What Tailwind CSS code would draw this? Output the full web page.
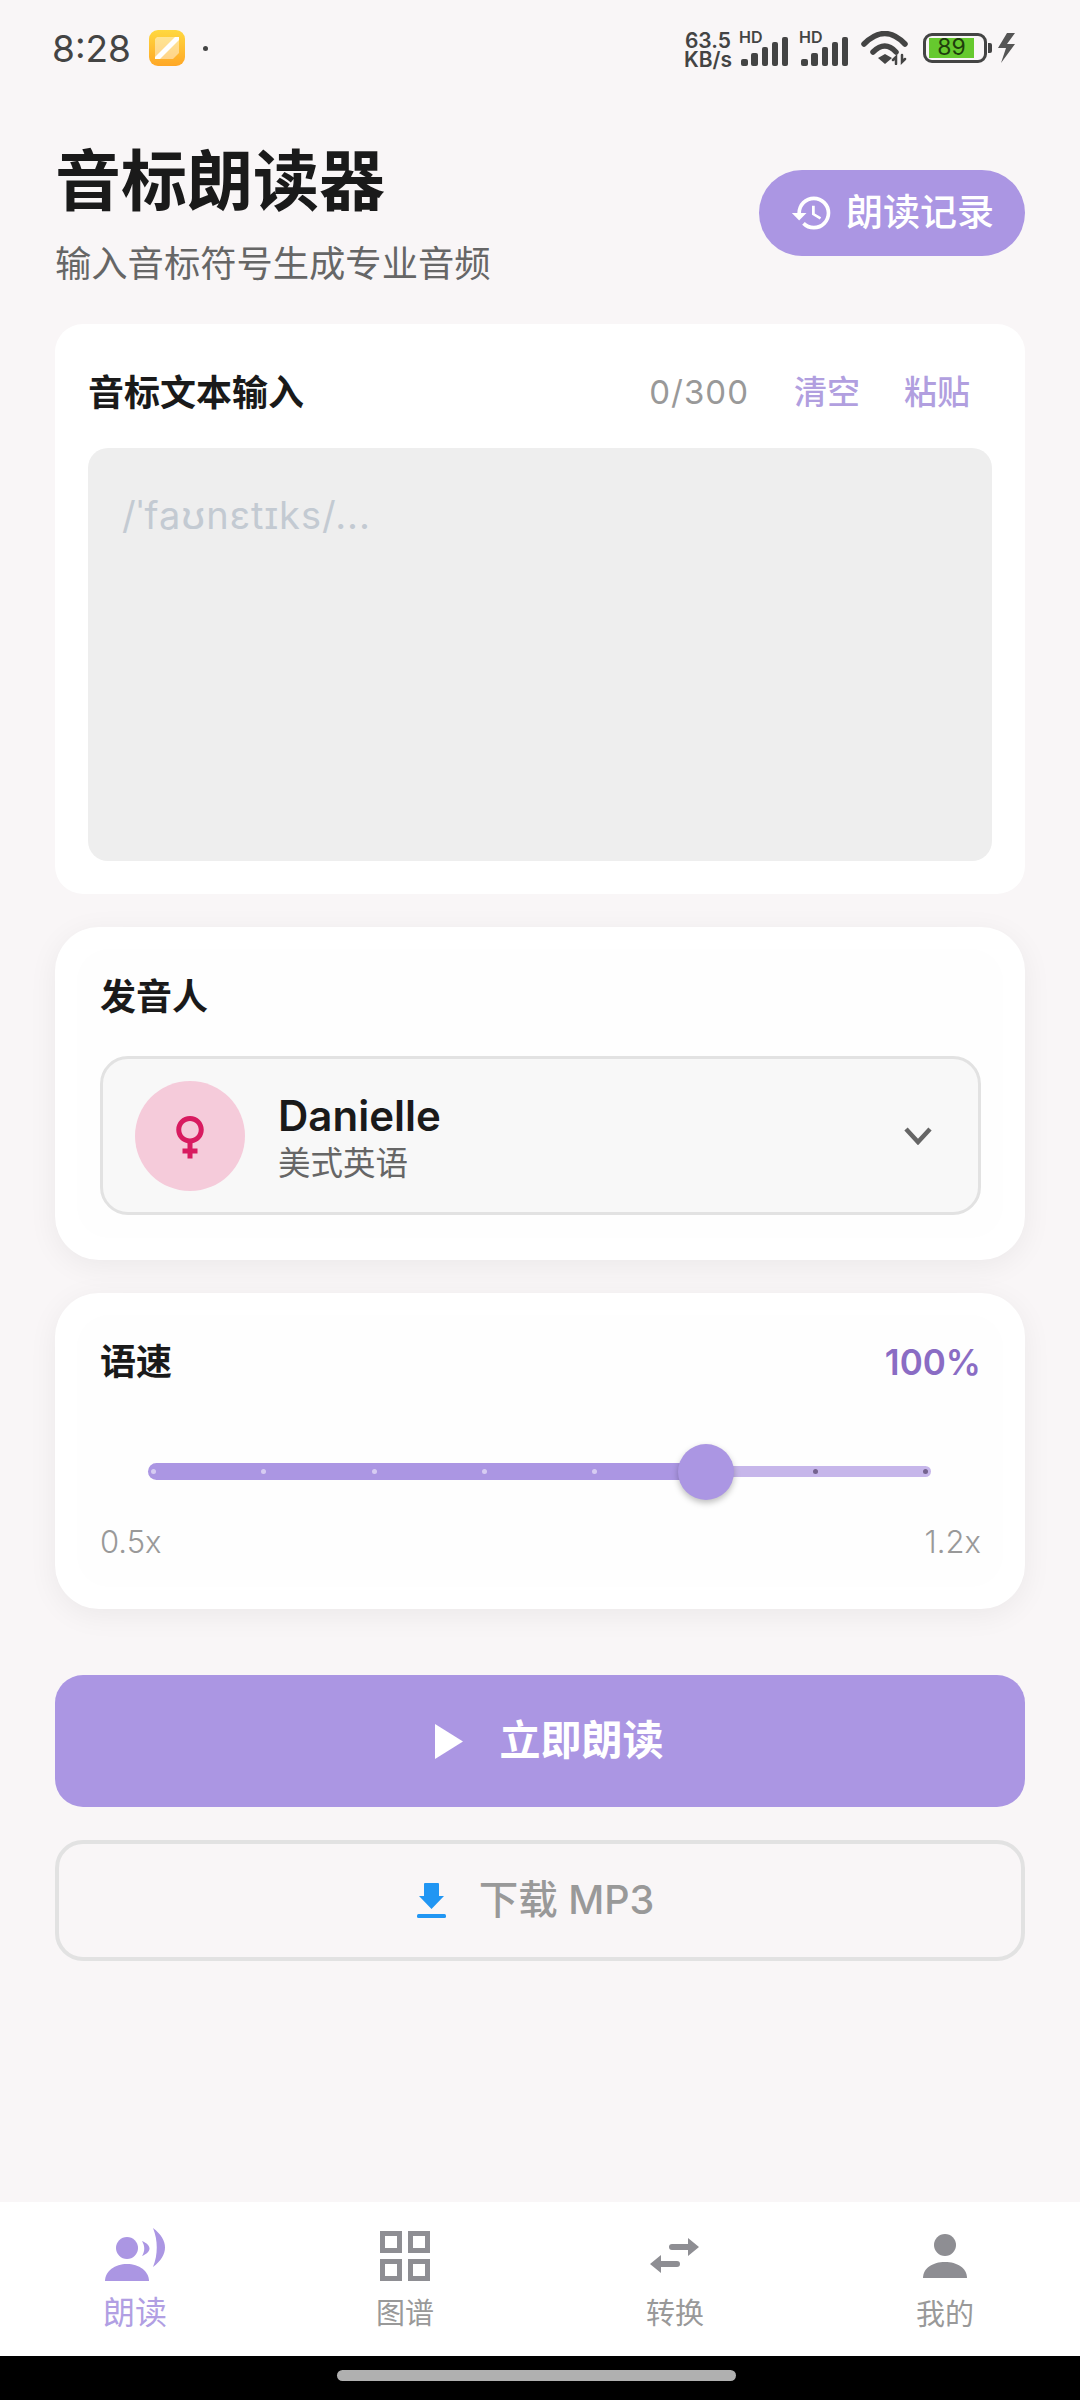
<!DOCTYPE html>
<html lang="zh-CN">
<head>
    <meta charset="UTF-8">
    <meta name="viewport" content="width=device-width, initial-scale=1.0">
    <title>音标朗读器</title>
    <script src="https://cdn.jsdelivr.net/npm/@tailwindcss/browser@4"></script>
</head>
<body class="bg-[#f9f6f7] font-['Inter','Noto_Sans_CJK_SC',sans-serif]">
<div class="w-[1080px] h-[2400px] flex flex-col overflow-hidden">

    <!-- status bar -->
    <div class="h-[96px] shrink-0 pl-[52px] pr-[64px] flex items-center justify-between text-[#444]">
        <div class="flex items-center">
            <span class="text-[37px] leading-none w-[97px]">8:28</span>
            <div class="w-[36px] h-[36px] rounded-[9px] bg-gradient-to-b from-[#ffd83f] to-[#ffa726] flex items-center justify-center">
                <svg width="24" height="22" viewBox="0 0 24 22"><path d="M2 0h22v16L18 22H0V2z" fill="#fff" opacity=".45"/><path d="M20 0h4v3L5 22H0v-2z" fill="#fff"/></svg>
            </div>
            <div class="w-[5px] h-[5px] rounded-full bg-[#444] ml-[18px]"></div>
        </div>
        <div class="flex items-center">
            <div class="text-[21px] leading-[19px] font-semibold text-center mr-[9px] mt-[4px]">63.5<br>KB/s</div>
            <div class="relative mr-[13px]">
                <svg class="mt-[6px]" width="47" height="29" viewBox="0 0 47 29" fill="#444"><rect x="0" y="22" width="7" height="7" rx="2"/><rect x="10" y="16" width="7" height="13" rx="2"/><rect x="21" y="10" width="6" height="19" rx="2"/><rect x="31" y="5" width="6" height="24" rx="2"/><rect x="41" y="0" width="6" height="29" rx="2"/></svg>
                <span class="absolute left-[-2px] top-[-2px] text-[16px] leading-none font-semibold">HD</span>
            </div>
            <div class="relative mr-[13px]">
                <svg class="mt-[6px]" width="47" height="29" viewBox="0 0 47 29" fill="#444"><rect x="0" y="22" width="7" height="7" rx="2"/><rect x="10" y="16" width="7" height="13" rx="2"/><rect x="21" y="10" width="6" height="19" rx="2"/><rect x="31" y="5" width="6" height="24" rx="2"/><rect x="41" y="0" width="6" height="29" rx="2"/></svg>
                <span class="absolute left-[-2px] top-[-2px] text-[16px] leading-none font-semibold">HD</span>
            </div>
            <svg class="mr-[15px]" width="47" height="34" viewBox="0 0 47 34" fill="none" stroke="#444" stroke-width="5.5" stroke-linecap="round">
                <path d="M3 13Q24-8 44 13"/>
                <path d="M12 21Q24 9 35 21"/>
                <path d="M17 27l7-4 7 4-7 6z" fill="#444" stroke="none"/>
                <path d="M35 33v-7l-3 3M41 24v7l3-3" stroke-width="2.5"/>
            </svg>
            <div class="w-[64px] h-[30px] border-[3.5px] border-[#444] rounded-[9px] pl-[3px] py-[2px] pr-[10px]">
                <div class="h-full bg-[#66c92e] text-[23px] leading-[18px] text-[#1f3d0c] text-center">89</div>
            </div>
            <div class="w-[4px] h-[10px] rounded-r-[2px] bg-[#444] ml-[1px] mr-[6px]"></div>
            <svg width="18" height="30" viewBox="0 0 18 30" fill="#555"><path d="M9 0 0 15h8L3 30l14-19H9l8-11z"/></svg>
        </div>
    </div>

    <main class="px-[55px]">
        <!-- header -->
        <div class="pt-[50px] flex justify-between items-start">
            <div>
                <h1 class="text-[66px] leading-[70px] font-bold text-[#1a1a1a]">音标朗读器</h1>
                <p class="text-[36.3px] leading-[44px] mt-[26px] text-[#666]">输入音标符号生成专业音频</p>
            </div>
            <button class="mt-[24px] w-[266px] h-[86px] rounded-full bg-[#ab96e3] flex items-center justify-center gap-[12px] text-white text-[37px] font-medium">
                <svg width="44" height="44" viewBox="0 0 24 24" fill="#fff"><path d="M13 3a9 9 0 0 0-9 9H1l3.89 3.89.07.14L9 12H6c0-3.87 3.13-7 7-7s7 3.13 7 7-3.13 7-7 7c-1.93 0-3.68-.79-4.94-2.06l-1.42 1.42A8.954 8.954 0 0 0 13 21a9 9 0 0 0 0-18zm-1 5v5l4.28 2.54.72-1.21-3.5-2.08V8H12z"/></svg>
                <span>朗读记录</span>
            </button>
        </div>

        <!-- input card -->
        <section class="mt-[38px] h-[570px] bg-white rounded-[28px] px-[33px] pt-[33px] flex flex-col">
            <div class="flex items-center justify-between h-[72px] pr-[22px]">
                <h2 class="text-[36px] font-bold text-[#1a1a1a]">音标文本输入</h2>
                <div class="flex items-center">
                    <span class="text-[33px] text-[#999] tracking-[1px] mr-[45px]">0/300</span>
                    <span class="text-[33px] text-[#b19fdf] font-medium mr-[44px]">清空</span>
                    <span class="text-[33px] text-[#b19fdf] font-medium">粘贴</span>
                </div>
            </div>
            <div class="mt-[19px] h-[413px] bg-[#eeeeee] rounded-[20px] px-[34px] pt-[45px]">
                <p class="text-[38px] leading-[44px] tracking-[1px] text-[#c3cad2]">/ˈfaʊnɛtɪks/...</p>
            </div>
        </section>

        <!-- voice card -->
        <section class="mt-[33px] h-[333px] bg-white rounded-[44px] p-[22px] shadow-[0_6px_30px_rgba(0,0,0,0.06)]">
            <div class="h-full rounded-[32px] bg-[#fefefe] pl-[23px] pr-[22px] pt-[26px]">
                <h2 class="text-[36px] leading-[44px] font-bold text-[#1a1a1a]">发音人</h2>
                <div class="mt-[37px] h-[159px] border-[3px] border-[#e2e2e2] bg-[#f8f8f8] rounded-[28px] pl-[32px] pr-[46px] flex items-center">
                    <div class="w-[110px] h-[110px] rounded-full bg-[#f5cbda] flex items-center justify-center">
                        <svg width="60" height="60" viewBox="0 0 24 24" fill="#d81b60"><path d="M17.5 9.5C17.5 6.46 15.04 4 12 4S6.5 6.46 6.5 9.5c0 2.7 1.94 4.93 4.5 5.4V17H9v2h2v2h2v-2h2v-2h-2v-2.1c2.56-.47 4.5-2.7 4.5-5.4zm-9 0C8.5 7.57 10.07 6 12 6s3.5 1.57 3.5 3.5S13.93 13 12 13s-3.5-1.57-3.5-3.5z"/></svg>
                    </div>
                    <div class="ml-[33px] flex-1 pt-[4px]">
                        <div class="text-[42px] leading-[50px] font-semibold text-[#1a1a1a]">Danielle</div>
                        <div class="text-[32.5px] leading-[40px] mt-[3px] text-[#666]">美式英语</div>
                    </div>
                    <svg width="28" height="18" viewBox="0 0 28 18" fill="none" stroke="#666" stroke-width="4.5"><path d="M2 2l12 13L26 2"/></svg>
                </div>
            </div>
        </section>

        <!-- speed card -->
        <section class="mt-[33px] h-[316px] bg-white rounded-[44px] p-[22px] shadow-[0_6px_30px_rgba(0,0,0,0.06)]">
            <div class="h-full rounded-[32px] bg-[#fefefe] pl-[23px] pr-[22px] pt-[25px]">
                <div class="flex items-center justify-between h-[44px]">
                    <h2 class="text-[36px] font-bold text-[#1a1a1a]">语速</h2>
                    <span class="text-[35px] font-semibold text-[#8a6cc4]">100%</span>
                </div>
                <!-- slider -->
                <div class="relative mt-[79px] mx-[48px] w-[783px] h-[17px] flex items-center">
                    <div class="h-[17px] w-[540px] rounded-l-full bg-[#ab96e3]"></div>
                    <div class="h-[11px] flex-1 rounded-r-full bg-[#c6b6ea]"></div>
                    <div class="absolute inset-x-[3px] top-[6px] flex justify-between">
                        <i class="w-[5px] h-[5px] rounded-full bg-[#d6ccf2]"></i>
                        <i class="w-[5px] h-[5px] rounded-full bg-[#d6ccf2]"></i>
                        <i class="w-[5px] h-[5px] rounded-full bg-[#d6ccf2]"></i>
                        <i class="w-[5px] h-[5px] rounded-full bg-[#d6ccf2]"></i>
                        <i class="w-[5px] h-[5px] rounded-full bg-[#d6ccf2]"></i>
                        <i class="w-[5px] h-[5px] rounded-full bg-[#d6ccf2]"></i>
                        <i class="w-[5px] h-[5px] rounded-full bg-[#75648f]"></i>
                        <i class="w-[5px] h-[5px] rounded-full bg-[#75648f]"></i>
                    </div>
                    <div class="absolute left-[530px] top-[-19px] w-[56px] h-[56px] rounded-full bg-[#ab96e3] shadow-[0_3px_6px_rgba(0,0,0,0.25)]"></div>
                </div>
                <div class="mt-[42px] flex justify-between text-[31px] leading-[40px] font-light text-[#999]">
                    <span>0.5x</span>
                    <span>1.2x</span>
                </div>
            </div>
        </section>

        <!-- actions -->
        <button class="mt-[66px] w-full h-[132px] rounded-[28px] bg-[#ab96e3] flex items-center justify-center gap-[37px] pl-[18px] text-white text-[41px] font-semibold">
            <svg width="28" height="35" viewBox="0 0 28 35" fill="#fff"><path d="M0 0l28 17.5L0 35z"/></svg>
            <span>立即朗读</span>
        </button>
        <button class="mt-[33px] w-full h-[121px] rounded-[28px] border-[4px] border-[#e2e2e2] flex items-center justify-center gap-[33px] pr-[9px] text-[#999] text-[39.5px] font-medium">
            <svg width="29" height="35" viewBox="0 0 29 35" fill="#2196f3"><path d="M7 1a1 1 0 0 1 1-1h13a1 1 0 0 1 1 1v12h5L14.5 26 2 13h5z"/><rect y="31" width="29" height="4" rx="1.5"/></svg>
            <span>下载 MP3</span>
        </button>
    </main>

    <!-- bottom nav -->
    <nav class="mt-auto h-[154px] shrink-0 bg-white grid grid-cols-4">
        <div class="flex flex-col items-center pt-[26px] text-[#b19fe3]">
            <svg width="60" height="53" viewBox="0 0 60 53" fill="#ab96e3"><circle cx="22" cy="20" r="11"/><path d="M0 53c0-10 10-17 22-17s22 7 22 17z"/><path d="M37 13C47 17 47 24 37 28 40 23 40 18 37 13zM48 0C64 12 64 27 48 39 53 27 53 12 48 0z"/></svg>
            <span class="text-[32px] leading-[40px] mt-[12px]">朗读</span>
        </div>
        <div class="flex flex-col items-center pt-[29px] text-[#999]">
            <svg width="50" height="50" viewBox="0 0 50 50" fill="none" stroke="#8e8e93" stroke-width="5"><rect x="2.5" y="2.5" width="17" height="17"/><rect x="30.5" y="2.5" width="17" height="17"/><rect x="2.5" y="30.5" width="17" height="17"/><rect x="30.5" y="30.5" width="17" height="17"/></svg>
            <span class="text-[29px] leading-[36px] mt-[15px]">图谱</span>
        </div>
        <div class="flex flex-col items-center pt-[36px] text-[#999]">
            <svg width="50" height="36" viewBox="0 0 50 36" fill="#8e8e93"><path d="M38 0l11 9-11 9v-6H22a3 3 0 0 1 0-6h16zM11 17v6h16a3 3 0 0 1 0 6H11v6L0 26z"/></svg>
            <span class="text-[29px] leading-[36px] mt-[22px]">转换</span>
        </div>
        <div class="flex flex-col items-center pt-[32px] text-[#999]">
            <svg width="44" height="44" viewBox="0 0 44 44" fill="#8e8e93"><circle cx="22" cy="11" r="11"/><path d="M0 44c0-10 10-16 22-16s22 6 22 16z"/></svg>
            <span class="text-[29px] leading-[36px] mt-[19px]">我的</span>
        </div>
    </nav>
    <div class="h-[44px] shrink-0 bg-black flex justify-center pt-[14px] pr-[7px]">
        <div class="w-[399px] h-[11px] rounded-full bg-[#b0b0b0]"></div>
    </div>
</div>
</body>
</html>
